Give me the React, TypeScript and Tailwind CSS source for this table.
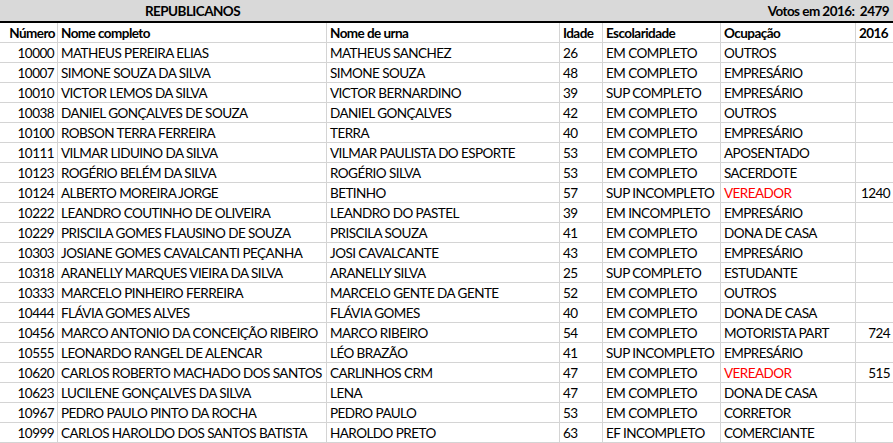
const rows: [string, string, string, string, string, string, string][] = [
  ["10000", "MATHEUS PEREIRA ELIAS", "MATHEUS SANCHEZ", "26", "EM COMPLETO", "OUTROS", ""],
  ["10007", "SIMONE SOUZA DA SILVA", "SIMONE SOUZA", "48", "EM COMPLETO", "EMPRESÁRIO", ""],
  ["10010", "VICTOR LEMOS DA SILVA", "VICTOR BERNARDINO", "39", "SUP COMPLETO", "EMPRESÁRIO", ""],
  ["10038", "DANIEL GONÇALVES DE SOUZA", "DANIEL GONÇALVES", "42", "EM COMPLETO", "OUTROS", ""],
  ["10100", "ROBSON TERRA FERREIRA", "TERRA", "40", "EM COMPLETO", "EMPRESÁRIO", ""],
  ["10111", "VILMAR LIDUINO DA SILVA", "VILMAR PAULISTA DO ESPORTE", "53", "EM COMPLETO", "APOSENTADO", ""],
  ["10123", "ROGÉRIO BELÉM DA SILVA", "ROGÉRIO SILVA", "53", "EM COMPLETO", "SACERDOTE", ""],
  ["10124", "ALBERTO MOREIRA JORGE", "BETINHO", "57", "SUP INCOMPLETO", "VEREADOR", "1240"],
  ["10222", "LEANDRO COUTINHO DE OLIVEIRA", "LEANDRO DO PASTEL", "39", "EM INCOMPLETO", "EMPRESÁRIO", ""],
  ["10229", "PRISCILA GOMES FLAUSINO DE SOUZA", "PRISCILA SOUZA", "41", "EM COMPLETO", "DONA DE CASA", ""],
  ["10303", "JOSIANE GOMES CAVALCANTI PEÇANHA", "JOSI CAVALCANTE", "43", "EM COMPLETO", "EMPRESÁRIO", ""],
  ["10318", "ARANELLY MARQUES VIEIRA DA SILVA", "ARANELLY SILVA", "25", "SUP COMPLETO", "ESTUDANTE", ""],
  ["10333", "MARCELO PINHEIRO FERREIRA", "MARCELO GENTE DA GENTE", "52", "EM COMPLETO", "OUTROS", ""],
  ["10444", "FLÁVIA GOMES ALVES", "FLÁVIA GOMES", "40", "EM COMPLETO", "DONA DE CASA", ""],
  ["10456", "MARCO ANTONIO DA CONCEIÇÃO RIBEIRO", "MARCO RIBEIRO", "54", "EM COMPLETO", "MOTORISTA PART", "724"],
  ["10555", "LEONARDO RANGEL DE ALENCAR", "LÉO BRAZÃO", "41", "SUP INCOMPLETO", "EMPRESÁRIO", ""],
  ["10620", "CARLOS ROBERTO MACHADO DOS SANTOS", "CARLINHOS CRM", "47", "EM COMPLETO", "VEREADOR", "515"],
  ["10623", "LUCILENE GONÇALVES DA SILVA", "LENA", "47", "EM COMPLETO", "DONA DE CASA", ""],
  ["10967", "PEDRO PAULO PINTO DA ROCHA", "PEDRO PAULO", "53", "EM COMPLETO", "CORRETOR", ""],
  ["10999", "CARLOS HAROLDO DOS SANTOS BATISTA", "HAROLDO PRETO", "63", "EF INCOMPLETO", "COMERCIANTE", ""],
];

const grid = "grid grid-cols-[58px_269px_233px_43px_118px_135px_37px]";
const cell = "h-5 border-r border-b border-[#d4d4d4] px-[3px] leading-5 whitespace-nowrap overflow-hidden";

export default function App() {
  return (
    <div className="w-[893px] h-[443px] overflow-hidden bg-white text-[13.5px] tracking-[-0.55px] text-black font-['Lato','Open_Sans',sans-serif]">
      {/* title bar */}
      <div className="h-[23px] bg-[#d9d9d9] border-b-2 border-black flex font-bold leading-[22px]">
        <div className="w-[58px]" />
        <div className="w-[269px] text-center">REPUBLICANOS</div>
        <div className="flex-1 text-right pr-[4px]">Votos em 2016:&nbsp; 2479</div>
      </div>

      {/* header */}
      <div className={`${grid} font-bold`}>
        <div className={`${cell} text-right !px-[2px]`}>Número</div>
        <div className={cell}>Nome completo</div>
        <div className={cell}>Nome de urna</div>
        <div className={cell}>Idade</div>
        <div className={cell}>Escolaridade</div>
        <div className={cell}>Ocupação</div>
        <div className={`${cell} border-r-0`}>2016</div>
      </div>

      {rows.map((r) => (
        <div key={r[0]} className={grid}>
          <div className={`${cell} text-right`}>{r[0]}</div>
          <div className={cell}>{r[1]}</div>
          <div className={cell}>{r[2]}</div>
          <div className={cell}>{r[3]}</div>
          <div className={cell}>{r[4]}</div>
          <div className={`${cell} ${r[5] === "VEREADOR" ? "text-[#ff0000]" : ""}`}>{r[5]}</div>
          <div className={`${cell} border-r-0 text-right`}>{r[6]}</div>
        </div>
      ))}
    </div>
  );
}
